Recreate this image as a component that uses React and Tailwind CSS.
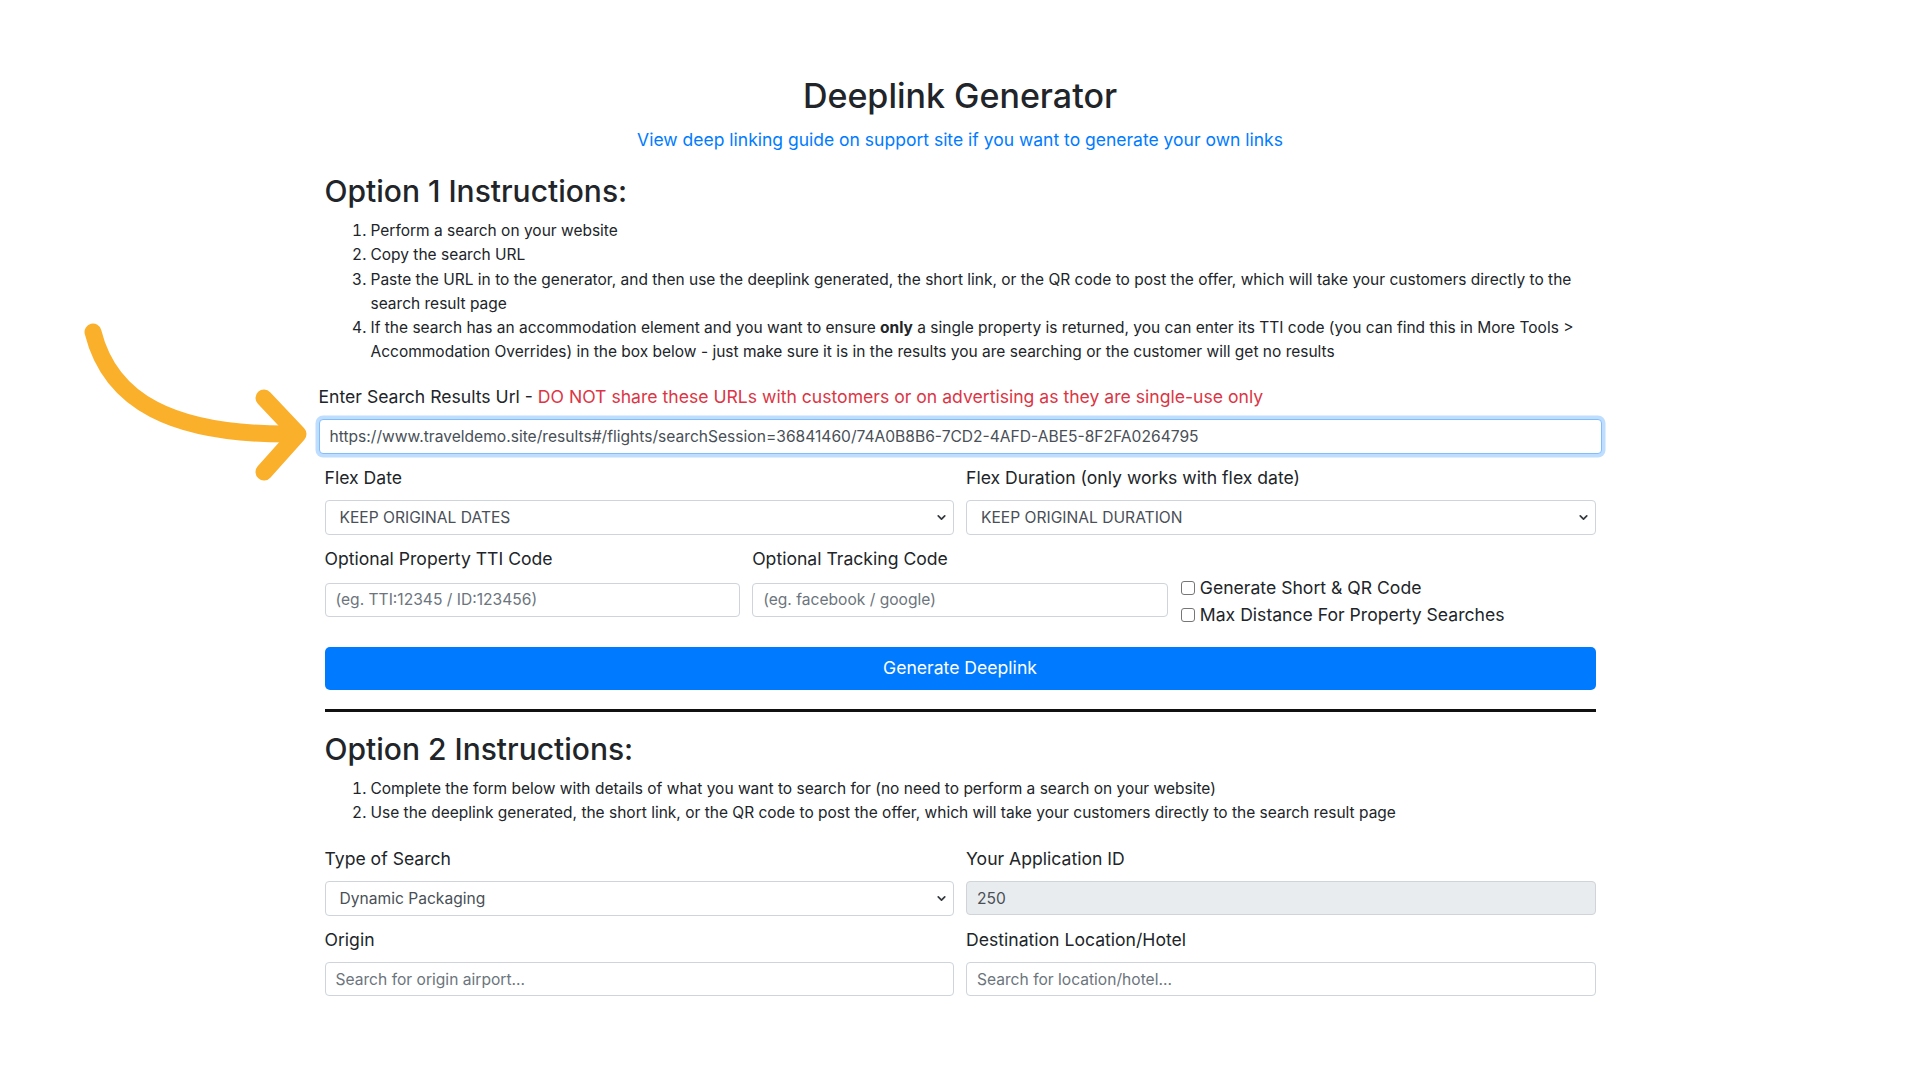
import { ChevronDown } from "lucide-react";

const font = { fontFamily: "Inter, 'Noto Sans', sans-serif" };

const Label = ({ children, className = "" }) => (
  <div className={"text-[17.6px] leading-[27px] text-[#212529] mb-[9px] " + className}>{children}</div>
);

const Select = ({ value }) => (
  <div className="relative">
    <select
      defaultValue={value}
      className="w-full h-[35px] appearance-none rounded-[4px] border border-[#ced4da] bg-white pl-[14px] pr-8 text-[15.6px] text-[#495057] outline-none"
      style={font}
    >
      <option>{value}</option>
    </select>
    <ChevronDown
      className="pointer-events-none absolute right-[6px] top-[11px] w-[13px] h-[13px] text-[#343a40]"
      strokeWidth={3.2}
    />
  </div>
);

const Input = ({ placeholder, value, disabled }) => (
  <input
    readOnly
    disabled={disabled}
    placeholder={placeholder}
    defaultValue={value}
    className={
      "w-full h-[34px] rounded-[4px] border border-[#ced4da] px-[10px] text-[15.6px] text-[#495057] placeholder:text-[#6c757d] outline-none " +
      (disabled ? "bg-[#e9ecef]" : "bg-white")
    }
    style={font}
  />
);

const Check = ({ children }) => (
  <label className="flex items-center gap-[5px] text-[17.6px] leading-[27px] text-[#212529] whitespace-nowrap">
    <span className="w-[14px] h-[14px] rounded-[3px] border border-[#767676] bg-white shrink-0" />
    {children}
  </label>
);

export default function App() {
  return (
    <div className="relative min-h-[1080px] bg-white text-[#212529]" style={font}>
      {/* annotation arrow */}
      <svg className="absolute left-[60px] top-[300px]" width="260" height="200" viewBox="0 0 260 200" fill="none">
        <path
          d="M33 32 C50 100 110 136 236 134"
          stroke="#FBB02C"
          strokeWidth="17"
          strokeLinecap="round"
        />
        <path
          d="M204 98 L238 134 L204 172"
          stroke="#FBB02C"
          strokeWidth="17"
          strokeLinecap="round"
          strokeLinejoin="round"
        />
      </svg>

      <div className="mx-auto w-[1271px] pt-[75px]">
        <h1 className="text-center text-[34px] leading-[41px] font-medium">Deeplink Generator</h1>
        <div className="mt-[11px] text-center text-[17.5px] leading-[25px] text-[#007bff]">
          View deep linking guide on support site if you want to generate your own links
        </div>

        <h2 className="mt-[21px] text-[30px] leading-[36px] font-medium">Option 1 Instructions:</h2>
        <ol className="mt-[10px] list-decimal pl-[46px] text-[15.5px] leading-[24.3px]">
          <li>Perform a search on your website</li>
          <li>Copy the search URL</li>
          <li>
            Paste the URL in to the generator, and then use the deeplink generated, the short link, or the QR code
            to post the offer, which will take your customers directly to the search result page
          </li>
          <li>
            If the search has an accommodation element and you want to ensure <b>only</b> a single property is
            returned, you can enter its TTI code (you can find this in More Tools &gt; Accommodation Overrides) in
            the box below - just make sure it is in the results you are searching or the customer will get no
            results
          </li>
        </ol>

        <div className="-mx-[6px] mt-[18px]">
          <Label>
            Enter Search Results Url -{" "}
            <span className="text-[#dc3545]">
              DO NOT share these URLs with customers or on advertising as they are single-use only
            </span>
          </Label>
          <input
            readOnly
            defaultValue="https://www.traveldemo.site/results#/flights/searchSession=36841460/74A0B8B6-7CD2-4AFD-ABE5-8F2FA0264795"
            className="w-full h-[35px] rounded-[4px] border border-[#80bdff] bg-white px-[10px] text-[15.6px] text-[#495057] outline-none shadow-[0_0_0_3.5px_rgba(0,123,255,0.25)]"
            style={font}
          />
        </div>

        <div className="mt-[10px] grid grid-cols-2 gap-x-3">
          <div>
            <Label>Flex Date</Label>
            <Select value="KEEP ORIGINAL DATES" />
          </div>
          <div>
            <Label>Flex Duration (only works with flex date)</Label>
            <Select value="KEEP ORIGINAL DURATION" />
          </div>
        </div>

        <div className="mt-[10px] grid grid-cols-3 gap-x-3">
          <div>
            <Label className="mb-[11px]">Optional Property TTI Code</Label>
            <Input placeholder="(eg. TTI:12345 / ID:123456)" />
          </div>
          <div>
            <Label className="mb-[11px]">Optional Tracking Code</Label>
            <Input placeholder="(eg. facebook / google)" />
          </div>
          <div className="h-[72px] pt-[29.5px] pl-px">
            <Check>Generate Short &amp; QR Code</Check>
            <Check>Max Distance For Property Searches</Check>
          </div>
        </div>

        <button
          className="mt-[30.5px] w-full h-[42.5px] rounded-[5px] bg-[#007bff] text-white text-[17.6px]"
          style={font}
        >
          Generate Deeplink
        </button>

        <div className="mt-[19px] h-[3px] bg-[#111]" />

        <h2 className="mt-[19px] text-[30px] leading-[36px] font-medium">Option 2 Instructions:</h2>
        <ol className="mt-[10px] list-decimal pl-[46px] text-[15.5px] leading-[24.3px]">
          <li>Complete the form below with details of what you want to search for (no need to perform a search on your website)</li>
          <li>
            Use the deeplink generated, the short link, or the QR code to post the offer, which will take your
            customers directly to the search result page
          </li>
        </ol>

        <div className="mt-[20px] grid grid-cols-2 gap-x-3">
          <div>
            <Label>Type of Search</Label>
            <Select value="Dynamic Packaging" />
          </div>
          <div>
            <Label>Your Application ID</Label>
            <Input value="250" disabled />
          </div>
        </div>

        <div className="mt-[10px] grid grid-cols-2 gap-x-3">
          <div>
            <Label>Origin</Label>
            <Input placeholder="Search for origin airport..." />
          </div>
          <div>
            <Label>Destination Location/Hotel</Label>
            <Input placeholder="Search for location/hotel..." />
          </div>
        </div>
      </div>
    </div>
  );
}
